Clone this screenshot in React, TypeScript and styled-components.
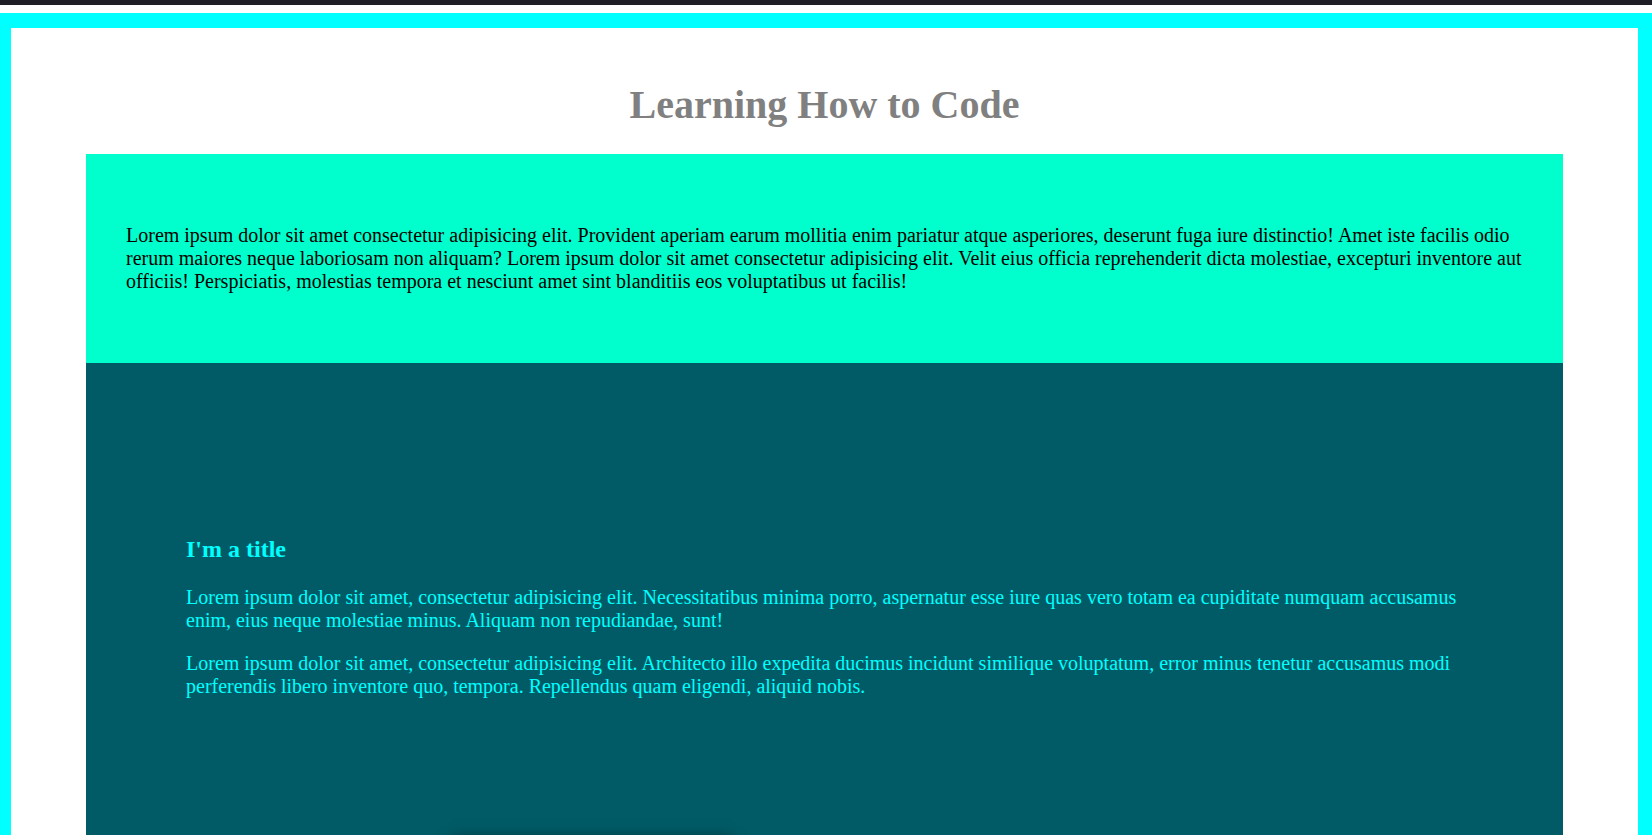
import React from "react";
import styled, { createGlobalStyle } from "styled-components";

const GlobalStyle = createGlobalStyle`
  html, body {
    margin: 0;
    padding: 0;
    background: #ffffff;
    font-family: "Liberation Serif", "Times New Roman", serif;
  }
`;

const TopBar = styled.div`
  height: 5px;
  background: #1e1e27;
`;

const Page = styled.div`
  margin-top: 8px;
  border-style: solid;
  border-color: #00ffff;
  border-width: 15px 14px 15px 11px;
  background: #ffffff;
  padding-bottom: 200px;
`;

const Heading = styled.h1`
  margin: 54px 0 26px;
  text-align: center;
  font-size: 40px;
  line-height: 46px;
  font-weight: bold;
  color: #808080;
`;

const Sections = styled.main`
  margin: 0 75px;
  display: flex;
  flex-direction: column;
`;

const Intro = styled.section`
  background: #00ffcc;
  padding: 70px 40px;
`;

const Text = styled.p<{ $color: string; $spaced?: boolean }>`
  margin: ${(p) => (p.$spaced ? "20px 0 0" : "0")};
  font-size: 20px;
  line-height: 23px;
  color: ${(p) => p.$color};
`;

const Feature = styled.section`
  background: #005b66;
  padding: 172px 100px 200px;
`;

const FeatureTitle = styled.h2`
  margin: 0 0 23px;
  font-size: 24px;
  line-height: 28px;
  font-weight: bold;
  color: #00ffff;
`;

const Card = styled.div`
  margin: 141px 0 0 266px;
  width: 280px;
  height: 200px;
  background: #005b66;
  box-shadow: 0 0 14px rgba(0, 0, 0, 0.55);
`;

export default function App() {
  return (
    <>
      <GlobalStyle />
      <TopBar />
      <Page>
        <Heading>Learning How to Code</Heading>
        <Sections>
          <Intro>
            <Text $color="#000000">
              Lorem ipsum dolor sit amet consectetur adipisicing elit. Provident aperiam earum mollitia enim pariatur
              atque asperiores, deserunt fuga iure distinctio! Amet iste facilis odio rerum maiores neque laboriosam non
              aliquam? Lorem ipsum dolor sit amet consectetur adipisicing elit. Velit eius officia reprehenderit dicta
              molestiae, excepturi inventore aut officiis! Perspiciatis, molestias tempora et nesciunt amet sint
              blanditiis eos voluptatibus ut facilis!
            </Text>
          </Intro>
          <Feature>
            <FeatureTitle>I'm a title</FeatureTitle>
            <Text $color="#00ffff">
              Lorem ipsum dolor sit amet, consectetur adipisicing elit. Necessitatibus minima porro, aspernatur esse
              iure quas vero totam ea cupiditate numquam accusamus enim, eius neque molestiae minus. Aliquam non
              repudiandae, sunt!
            </Text>
            <Text $color="#00ffff" $spaced>
              Lorem ipsum dolor sit amet, consectetur adipisicing elit. Architecto illo expedita ducimus incidunt
              similique voluptatum, error minus tenetur accusamus modi perferendis libero inventore quo, tempora.
              Repellendus quam eligendi, aliquid nobis.
            </Text>
            <Card />
          </Feature>
        </Sections>
      </Page>
    </>
  );
}
